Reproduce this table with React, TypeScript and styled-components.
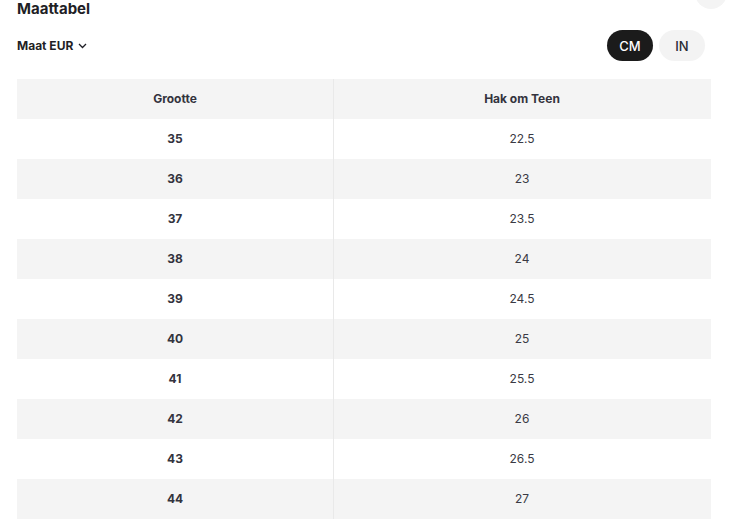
import React from "react";
import styled, { createGlobalStyle } from "styled-components";

const Global = createGlobalStyle`
  html, body { margin: 0; padding: 0; background: #fff; }
  body { font-family: Inter, "Noto Sans", sans-serif; color: #2a2a33; overflow: hidden; }
`;

const Page = styled.div`
  position: relative;
  padding: 0 26px 0 17px;
`;

const CloseButton = styled.button`
  position: absolute;
  top: -22px;
  right: 10px;
  width: 32px;
  height: 32px;
  border-radius: 50%;
  border: none;
  background: #f4f4f4;
  padding: 0;
`;

const Title = styled.h2`
  margin: -1px 0 0 0;
  font-size: 15px;
  line-height: 20px;
  font-weight: 700;
  color: #1f1f26;
`;

const Toolbar = styled.div`
  margin-top: 11px;
  height: 31px;
  display: flex;
  align-items: center;
  justify-content: space-between;
  padding-right: 6px;
`;

const SizeSelect = styled.div`
  display: flex;
  align-items: center;
  gap: 5px;
  font-size: 12px;
  font-weight: 700;
  color: #1f1f26;
`;

const UnitGroup = styled.div`
  display: flex;
  gap: 6px;
`;

const UnitButton = styled.button<{ $active?: boolean }>`
  width: 46px;
  height: 31px;
  border-radius: 16px;
  border: none;
  font-family: inherit;
  font-size: 13px;
  font-weight: 500;
  background: ${(p) => (p.$active ? "#1b1b1b" : "#f3f3f3")};
  color: ${(p) => (p.$active ? "#fff" : "#2a2a33")};
  padding: 0;
`;

const Table = styled.div`
  margin-top: 18px;
  display: grid;
  grid-template-columns: 316px 1fr;
`;

const Cell = styled.div<{ $shade?: boolean; $bold?: boolean; $divider?: boolean }>`
  height: 40px;
  box-sizing: border-box;
  padding-bottom: 2px;
  display: flex;
  align-items: center;
  justify-content: center;
  font-size: 12px;
  font-weight: ${(p) => (p.$bold ? 700 : 400)};
  color: ${(p) => (p.$bold ? "#33333d" : "#3a3a44")};
  background: ${(p) => (p.$shade ? "#f4f4f4" : "#fff")};
  box-shadow: ${(p) => (p.$divider ? "inset 1px 0 0 #e9e9e9" : "none")};
`;

const rows: [string, string][] = [
  ["35", "22.5"],
  ["36", "23"],
  ["37", "23.5"],
  ["38", "24"],
  ["39", "24.5"],
  ["40", "25"],
  ["41", "25.5"],
  ["42", "26"],
  ["43", "26.5"],
  ["44", "27"],
];

export default function App() {
  return (
    <Page>
      <Global />
      <CloseButton aria-label="Sluiten" />
      <Title>Maattabel</Title>
      <Toolbar>
        <SizeSelect>
          Maat EUR
          <svg width="9" height="6" viewBox="0 0 9 6" fill="none">
            <path d="M1 1l3.5 3.5L8 1" stroke="#1f1f26" strokeWidth="1.3" />
          </svg>
        </SizeSelect>
        <UnitGroup>
          <UnitButton $active>CM</UnitButton>
          <UnitButton>IN</UnitButton>
        </UnitGroup>
      </Toolbar>
      <Table>
        <Cell $shade $bold>Grootte</Cell>
        <Cell $shade $bold $divider>Hak om Teen</Cell>
        {rows.map(([size, cm], i) => (
          <React.Fragment key={size}>
            <Cell $shade={i % 2 === 1} $bold>{size}</Cell>
            <Cell $shade={i % 2 === 1} $divider>{cm}</Cell>
          </React.Fragment>
        ))}
      </Table>
    </Page>
  );
}
